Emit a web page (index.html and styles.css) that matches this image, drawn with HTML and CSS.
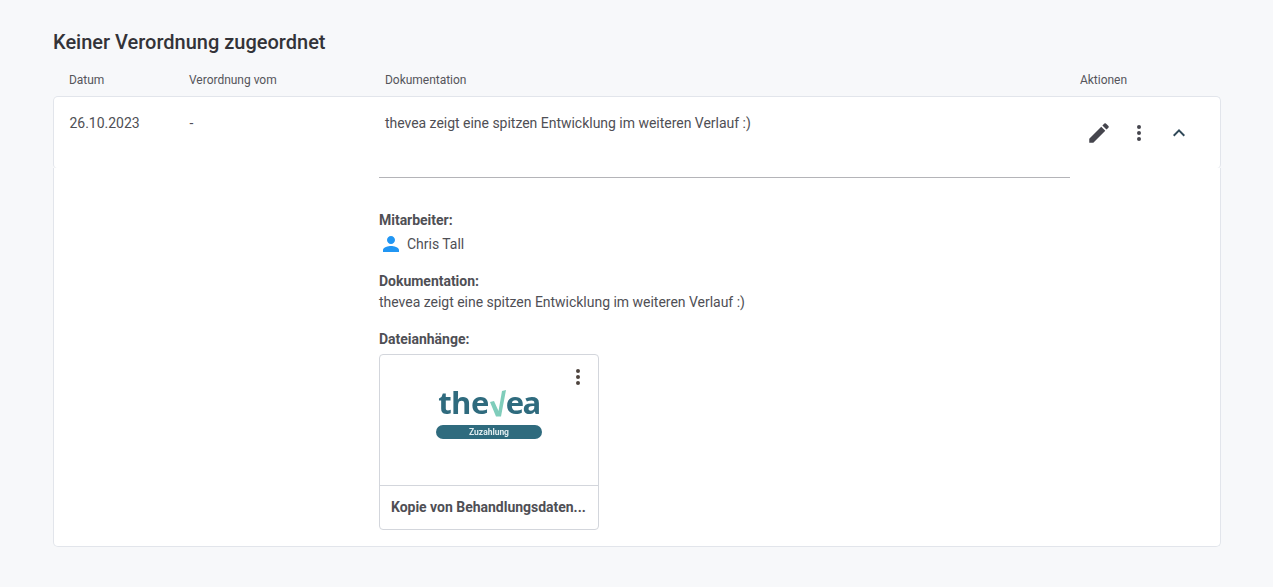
FILE: index.html
```html
<!doctype html>
<html lang="de">
<head>
  <meta charset="UTF-8">
  <title>Dokumentation</title>
  <link rel="stylesheet" href="styles.css">
</head>
<body>
  <div class="page">
    <h2 class="title">Keiner Verordnung zugeordnet</h2>
    <div class="cols head">
      <span>Datum</span>
      <span>Verordnung vom</span>
      <span>Dokumentation</span>
      <span>Aktionen</span>
    </div>
    <div class="row cols">
      <span>26.10.2023</span>
      <span>-</span>
      <span>thevea zeigt eine spitzen Entwicklung im weiteren Verlauf :)</span>
      <div class="actions">
        <svg class="ico-edit" viewBox="0 0 24 24"><path d="M3 17.25V21h3.75L17.81 9.94l-3.75-3.75L3 17.25zM20.71 7.04a1 1 0 0 0 0-1.41l-2.34-2.34a1 1 0 0 0-1.41 0l-1.83 1.83 3.75 3.75 1.83-1.83z"/></svg>
        <svg class="ico-more" viewBox="0 0 24 24"><path d="M12 8a2 2 0 1 0 0-4 2 2 0 0 0 0 4zm0 2a2 2 0 1 0 0 4 2 2 0 0 0 0-4zm0 6a2 2 0 1 0 0 4 2 2 0 0 0 0-4z"/></svg>
        <svg class="ico-up" viewBox="0 0 24 24"><path d="M7.41 15.41 12 10.83l4.59 4.58L18 14l-6-6-6 6z"/></svg>
      </div>
    </div>
    <div class="detail">
      <div class="detail-inner">
        <hr class="line">
        <div class="block">
          <b>Mitarbeiter:</b>
          <div class="person">
            <svg viewBox="0 0 24 24"><path d="M12 12c2.21 0 4-1.79 4-4s-1.79-4-4-4-4 1.79-4 4 1.79 4 4 4zm0 2c-2.67 0-8 1.34-8 4v2h16v-2c0-2.66-5.33-4-8-4z"/></svg>
            <span>Chris Tall</span>
          </div>
        </div>
        <div class="block block-doc">
          <b>Dokumentation:</b>
          <div class="doc-text">thevea zeigt eine spitzen Entwicklung im weiteren Verlauf :)</div>
        </div>
        <div class="block">
          <b>Dateianhänge:</b>
          <div class="file">
            <div class="thumb">
              <div class="logo">
                <div class="logo-name"><span>the</span><svg viewBox="0 0 16 27"><path d="M0 12 4 11 8.5 21 12 1 16 0 11 26.5 6 26.5Z"/></svg><span class="logo-end">ea</span></div>
                <div class="logo-pill">Zuzahlung</div>
              </div>
              <svg class="file-more" viewBox="0 0 24 24"><path d="M12 8a2 2 0 1 0 0-4 2 2 0 0 0 0 4zm0 2a2 2 0 1 0 0 4 2 2 0 0 0 0-4zm0 6a2 2 0 1 0 0 4 2 2 0 0 0 0-4z"/></svg>
            </div>
            <div class="file-name">Kopie von Behandlungsdaten...</div>
          </div>
        </div>
      </div>
    </div>
  </div>
</body>
</html>
```

FILE: styles.css
```css
* { margin: 0; padding: 0; box-sizing: border-box; }
html, body { height: 100%; overflow: hidden; }
body {
  background: #f7f8fa;
  font-family: Roboto, "Liberation Sans", sans-serif;
  font-size: 14px;
  letter-spacing: -0.02px;
  color: #4f4f55;
}
.page { width: 1168px; margin-left: 53px; padding-top: 31px; }
.title { font-size: 20px; line-height: 22px; font-weight: 500; letter-spacing: 0; color: #333338; }

.cols { display: grid; grid-template-columns: 120px 196px 695px 1fr; }
.head { font-size: 12px; line-height: 14px; padding: 20px 0 9px 16px; color: #55555a; }

.row {
  grid-template-columns: 120px 195.4px 695.6px 1fr;
  height: 72px;
  padding: 17px 0 0 15.5px;
  line-height: 18px;
  background: #fff;
  border: 1px solid #e2e5eb;
  border-bottom: 0;
  border-radius: 5px 5px 4px 4px;
}
.actions { display: flex; align-items: center; height: 36px; margin: 1px 0 0 -0.5px; }
.ico-edit { width: 26px; height: 26px; fill: #45454d; margin-left: 6px; }
.ico-more { width: 24px; height: 24px; fill: #45454d; margin-left: 15px; }
.ico-up { width: 24px; height: 24px; fill: #2f4858; margin-left: 16px; }

.detail {
  background: #fff;
  border: 1px solid #e2e5eb;
  border-top: 0;
  border-radius: 0 0 5px 5px;
  height: 379px;
  padding-left: 325px;
}
.detail-inner { width: 691px; padding-top: 9px; }
.line { border: 0; border-top: 1px solid #b4b4b8; }
.block { margin-top: 17px; line-height: 20px; }
.block:first-of-type { margin-top: 32px; }
.block-doc { margin-top: 13px; }
.doc-text { margin-top: 1px; }
.block b { font-weight: 700; display: block; }
.person { display: flex; align-items: center; height: 28px; }
.person svg { width: 24px; height: 24px; fill: #2196f3; margin-right: 4px; }

.file {
  width: 220px;
  height: 176px;
  margin-top: 5px;
  border: 1px solid #d3d6dc;
  border-radius: 4px;
  background: #fff;
}
.thumb { position: relative; height: 131px; border-bottom: 1px solid #d3d6dc; }
.logo { width: 106px; margin-left: 56px; padding-top: 32px; filter: blur(0.5px); }
.logo-name {
  display: flex;
  justify-content: center;
  align-items: flex-end;
  height: 30px;
  font-family: "Open Sans", sans-serif;
  font-size: 31px;
  line-height: 30px;
  font-weight: 700;
  letter-spacing: -0.5px;
  color: #2f6b7e;
}
.logo-name svg { width: 16px; height: 27px; fill: #7fcdbb; flex: none; margin-left: 1px; }
.logo-end { letter-spacing: -1.5px; }
.logo-pill {
  height: 14px;
  margin-top: 8px;
  border-radius: 7px;
  background: #2f6b7e;
  color: #dfecef;
  font-size: 8.5px;
  line-height: 14px;
  font-weight: 700;
  text-align: center;
}
.file-more { position: absolute; top: 10px; right: 8px; width: 24px; height: 24px; fill: #4e443e; }
.file-name { padding: 12px 11px 0; font-weight: 700; line-height: 18px; white-space: nowrap; overflow: hidden; }
```
